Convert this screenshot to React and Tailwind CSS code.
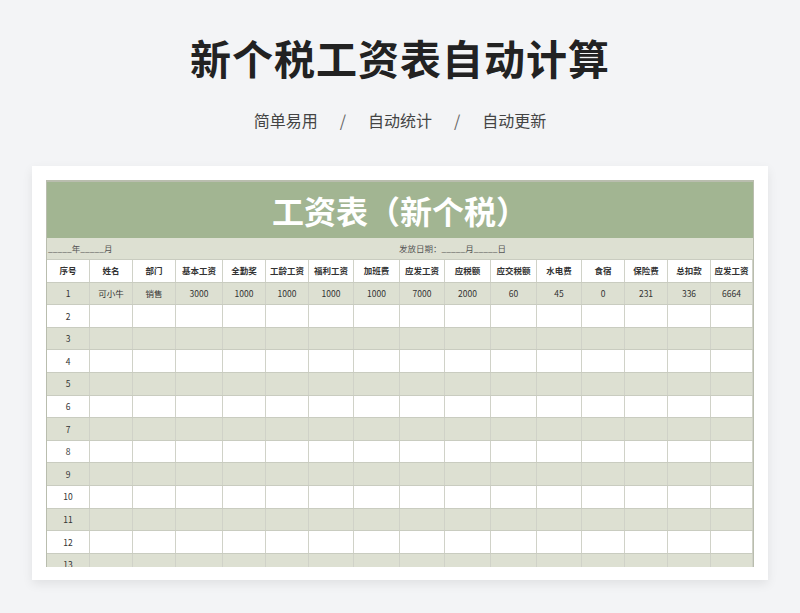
const cols = "grid-cols-[43px_43px_43px_47px_43px_43px_45px_46px_45px_46px_46px_45px_43px_43px_43px_42px]";
const heads = ["序号","姓名","部门","基本工资","全勤奖","工龄工资","福利工资","加班费","应发工资","应税额","应交税额","水电费","食宿","保险费","总扣款","应发工资"];
const row1 = ["1","可小牛","销售","3000","1000","1000","1000","1000","7000","2000","60","45","0","231","336","6664"];

function Row({ cells, bg, bold }) {
  return (
    <div className={`grid ${cols} h-[22.6px] ${bg} border-b border-[#c9ccc0]`}>
      {cells.map((c, i) => (
        <div key={i} className={`flex items-center justify-center border-r border-[#d0d2c8] text-[8.5px] text-[#333] ${bold ? "font-bold" : ""}`}>{c}</div>
      ))}
    </div>
  );
}

export default function App() {
  const rows = [];
  for (let i = 2; i <= 13; i++) {
    rows.push(<Row key={i} cells={[String(i), ...Array(15).fill("")]} bg={i % 2 === 0 ? "bg-white" : "bg-[#dde0d2]"} />);
  }
  return (
    <div className="w-[800px] h-[613px] bg-[#f3f4f6] flex flex-col items-center overflow-hidden" style={{ fontFamily: '"Noto Sans CJK SC", "Noto Sans", sans-serif' }}>
      <h1 className="mt-[29px] h-[56px] text-[41px] leading-[56px] font-bold text-[#222] tracking-[1px]">新个税工资表自动计算</h1>
      <div className="mt-[23px] h-[24px] flex items-center gap-[22px] text-[16px] text-[#444]">
        <span>简单易用</span><span className="text-[#666]">/</span><span>自动统计</span><span className="text-[#666]">/</span><span>自动更新</span>
      </div>
      <div className="mt-[34px] w-[736px] h-[414px] bg-white shadow-[0_4px_10px_rgba(0,0,0,0.08)] px-[14px] pt-[14px]">
        <div className="w-[708px] h-[387px] overflow-hidden border-l border-r border-t-2 border-[#b9bdae]">
          <div className="h-[56px] bg-[#a2b592] flex items-center justify-center text-white text-[32px] font-bold">工资表（新个税）</div>
          <div className="h-[22px] bg-[#dde0d2] flex items-center text-[8.5px] text-[#555] border-b border-[#c9ccc0]">
            <span className="w-[352px] pl-[1px]">_____年_____月</span>
            <span>发放日期：_____月_____日</span>
          </div>
          <Row cells={heads} bg="bg-white" bold />
          <Row cells={row1} bg="bg-[#dde0d2]" />
          {rows}
        </div>
      </div>
    </div>
  );
}
